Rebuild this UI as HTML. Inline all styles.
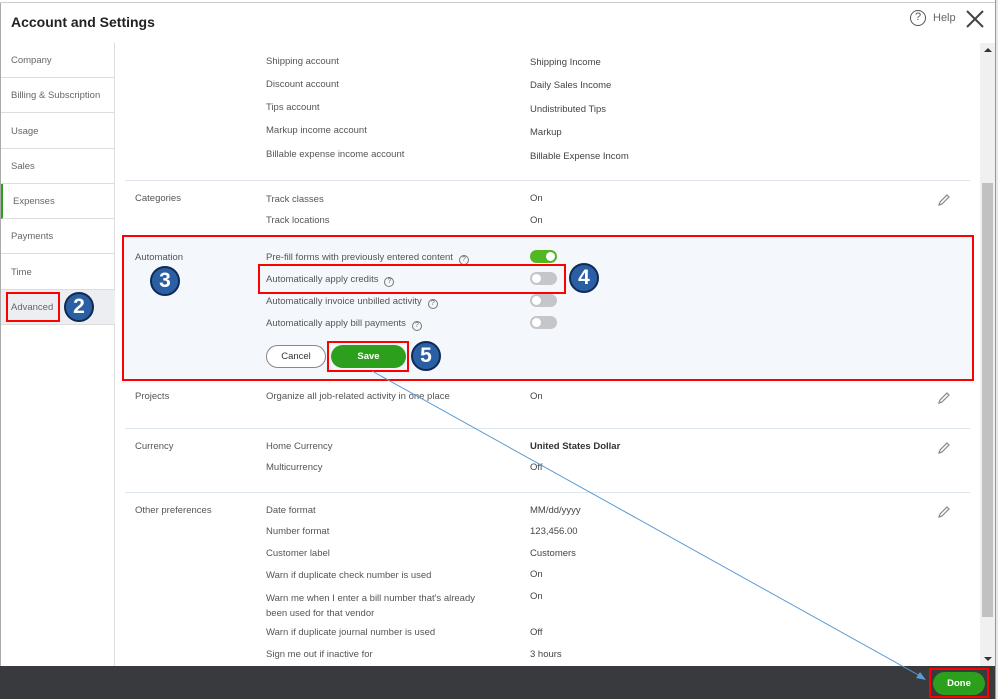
<!DOCTYPE html>
<html><head><meta charset="utf-8"><style>
*{margin:0;padding:0;box-sizing:border-box}
body{width:998px;height:699px;position:relative;overflow:hidden;background:#fff;font-family:"Liberation Sans",sans-serif;color:#555;font-size:9.5px}
.a{position:absolute;white-space:nowrap}
.nav{position:absolute;left:1px;width:114px;height:35px;border-bottom:1px solid #ddd;padding:12px 0 0 10px;color:#666;font-size:9.5px}
.hr{position:absolute;left:125px;width:845px;height:1px;background:#dfe6ef}
.v{color:#444}
.b{color:#333;font-weight:bold}
.tog{position:absolute;left:530px;width:27px;height:13px;border-radius:7px;background:#c4c6ca}
.tog::after{content:"";position:absolute;left:2px;top:2px;width:9px;height:9px;border-radius:50%;background:#fff}
.tog.on{background:#52b723}.tog.on::after{left:16px}
.q{display:inline-block;width:10px;height:10px;border:1px solid #777;border-radius:50%;font-size:7px;text-align:center;line-height:8px;margin-left:6px;vertical-align:-1px;color:#666}
.num{position:absolute;width:30px;height:30px;border-radius:50%;background:#2a5fa3;border:2px solid #0e2a55;color:#fff;font-weight:bold;font-size:21px;text-align:center;line-height:26px}
.red{position:absolute;border:2px solid #f00}
.pen{position:absolute;width:14px;height:14px}
</style></head><body>
<div class="a" style="left:0;top:0;width:998px;height:3px;border-bottom:1px solid #ccc;background:#fff"></div>
<div class="a" style="left:0;top:3px;width:1px;height:663px;background:#aaa"></div>
<div class="a" style="left:995px;top:0;width:3px;height:699px;background:#e8e8e8;border-left:1px solid #999"></div>
<div class="a" style="left:11px;top:14px;font-size:14px;font-weight:bold;color:#222">Account and Settings</div>
<div class="a" style="left:910px;top:10px;width:16px;height:16px;border:1.5px solid #555;border-radius:50%;font-size:11px;text-align:center;line-height:13px;color:#555">?</div>
<div class="a" style="left:933px;top:12px;font-size:11px;color:#666">Help</div>
<svg class="a" style="left:966px;top:10px" width="18" height="18"><path d="M1 1L17 17M17 1L1 17" stroke="#444" stroke-width="2"/></svg>

<div class="a" style="left:114px;top:43px;width:1px;height:623px;background:#ddd"></div>
<div class="nav" style="top:43px">Company</div>
<div class="nav" style="top:78px">Billing &amp; Subscription</div>
<div class="nav" style="top:114px">Usage</div>
<div class="nav" style="top:149px">Sales</div>
<div class="nav" style="top:184px;border-left:2px solid #2ca01c">Expenses</div>
<div class="nav" style="top:219px">Payments</div>
<div class="nav" style="top:255px">Time</div>
<div class="nav" style="top:290px;background:#eceef1">Advanced</div>
<div class="red" style="left:6px;top:292px;width:54px;height:30px"></div>
<div class="num" style="left:64px;top:292px">2</div>

<div class="a" style="left:266px;top:56px">Shipping account</div><div class="a v" style="left:530px;top:57px">Shipping Income</div>
<div class="a" style="left:266px;top:79px">Discount account</div><div class="a v" style="left:530px;top:80px">Daily Sales Income</div>
<div class="a" style="left:266px;top:102px">Tips account</div><div class="a v" style="left:530px;top:104px">Undistributed Tips</div>
<div class="a" style="left:266px;top:125px">Markup income account</div><div class="a v" style="left:530px;top:127px">Markup</div>
<div class="a" style="left:266px;top:149px">Billable expense income account</div><div class="a v" style="left:530px;top:151px">Billable Expense Incom</div>
<div class="hr" style="top:180px"></div>
<div class="a" style="left:135px;top:193px">Categories</div>
<div class="a" style="left:266px;top:194px">Track classes</div><div class="a v" style="left:530px;top:193px">On</div>
<div class="a" style="left:266px;top:215px">Track locations</div><div class="a v" style="left:530px;top:215px">On</div>

<div class="a" style="left:123px;top:236px;width:850px;height:145px;background:#f4f7fc"></div>
<div class="red" style="left:122px;top:235px;width:852px;height:146px"></div>
<div class="a" style="left:135px;top:252px">Automation</div>
<div class="num" style="left:150px;top:266px">3</div>
<div class="a" style="left:266px;top:252px">Pre-fill forms with previously entered content<span class="q">?</span></div>
<div class="tog on" style="top:250px"></div>
<div class="a" style="left:266px;top:274px">Automatically apply credits<span class="q">?</span></div>
<div class="tog" style="top:272px"></div>
<div class="red" style="left:258px;top:264px;width:308px;height:30px"></div>
<div class="num" style="left:569px;top:263px">4</div>
<div class="a" style="left:266px;top:296px">Automatically invoice unbilled activity<span class="q">?</span></div>
<div class="tog" style="top:294px"></div>
<div class="a" style="left:266px;top:318px">Automatically apply bill payments<span class="q">?</span></div>
<div class="tog" style="top:316px"></div>
<div class="a" style="left:266px;top:345px;width:60px;height:23px;border:1px solid #888;border-radius:12px;background:#fff;text-align:center;line-height:21px;color:#333">Cancel</div>
<div class="a" style="left:331px;top:345px;width:75px;height:23px;border-radius:12px;background:#2ca01c;text-align:center;line-height:23px;color:#fff;font-weight:bold">Save</div>
<div class="red" style="left:327px;top:341px;width:82px;height:31px"></div>
<div class="num" style="left:411px;top:341px">5</div>

<div class="a" style="left:135px;top:391px">Projects</div>
<div class="a" style="left:266px;top:391px">Organize all job-related activity in one place</div><div class="a v" style="left:530px;top:391px">On</div>
<div class="hr" style="top:428px"></div>
<div class="a" style="left:135px;top:441px">Currency</div>
<div class="a" style="left:266px;top:441px">Home Currency</div><div class="a b" style="left:530px;top:441px">United States Dollar</div>
<div class="a" style="left:266px;top:462px">Multicurrency</div><div class="a v" style="left:530px;top:462px">Off</div>
<div class="hr" style="top:492px"></div>
<div class="a" style="left:135px;top:505px">Other preferences</div>
<div class="a" style="left:266px;top:505px">Date format</div><div class="a v" style="left:530px;top:505px">MM/dd/yyyy</div>
<div class="a" style="left:266px;top:526px">Number format</div><div class="a v" style="left:530px;top:526px">123,456.00</div>
<div class="a" style="left:266px;top:548px">Customer label</div><div class="a v" style="left:530px;top:548px">Customers</div>
<div class="a" style="left:266px;top:570px">Warn if duplicate check number is used</div><div class="a v" style="left:530px;top:569px">On</div>
<div class="a" style="left:266px;top:591px;line-height:15px">Warn me when I enter a bill number that's already<br>been used for that vendor</div><div class="a v" style="left:530px;top:591px">On</div>
<div class="a" style="left:266px;top:627px">Warn if duplicate journal number is used</div><div class="a v" style="left:530px;top:627px">Off</div>
<div class="a" style="left:266px;top:649px">Sign me out if inactive for</div><div class="a v" style="left:530px;top:649px">3 hours</div>

<svg class="pen" style="left:937px;top:193px" viewBox="0 0 14 14"><path d="M2 12l1-3 7-7 2 2-7 7z" fill="none" stroke="#888" stroke-width="1.2"/></svg>
<svg class="pen" style="left:937px;top:391px" viewBox="0 0 14 14"><path d="M2 12l1-3 7-7 2 2-7 7z" fill="none" stroke="#888" stroke-width="1.2"/></svg>
<svg class="pen" style="left:937px;top:441px" viewBox="0 0 14 14"><path d="M2 12l1-3 7-7 2 2-7 7z" fill="none" stroke="#888" stroke-width="1.2"/></svg>
<svg class="pen" style="left:937px;top:505px" viewBox="0 0 14 14"><path d="M2 12l1-3 7-7 2 2-7 7z" fill="none" stroke="#888" stroke-width="1.2"/></svg>

<div class="a" style="left:980px;top:43px;width:15px;height:623px;background:#f0f0f0"></div>
<div class="a" style="left:982px;top:183px;width:11px;height:434px;background:#c1c1c1"></div>
<div class="a" style="left:984px;top:48px;width:0;height:0;border:4px solid transparent;border-bottom:4px solid #333;border-top:0"></div>
<div class="a" style="left:984px;top:657px;width:0;height:0;border:4px solid transparent;border-top:4px solid #333;border-bottom:0"></div>

<div class="a" style="left:0;top:666px;width:995px;height:33px;background:#393a3d"></div>
<div class="a" style="left:933px;top:672px;width:52px;height:23px;border-radius:12px;background:#2ca01c;color:#fff;font-weight:bold;text-align:center;line-height:23px">Done</div>
<div class="red" style="left:929px;top:668px;width:60px;height:30px"></div>

<svg class="a" style="left:0;top:0" width="998" height="699"><line x1="372" y1="371" x2="922" y2="677" stroke="#5b9bd5" stroke-width="1"/><path d="M926 680l-10-2 4-6z" fill="#5b9bd5"/></svg>
</body></html>
